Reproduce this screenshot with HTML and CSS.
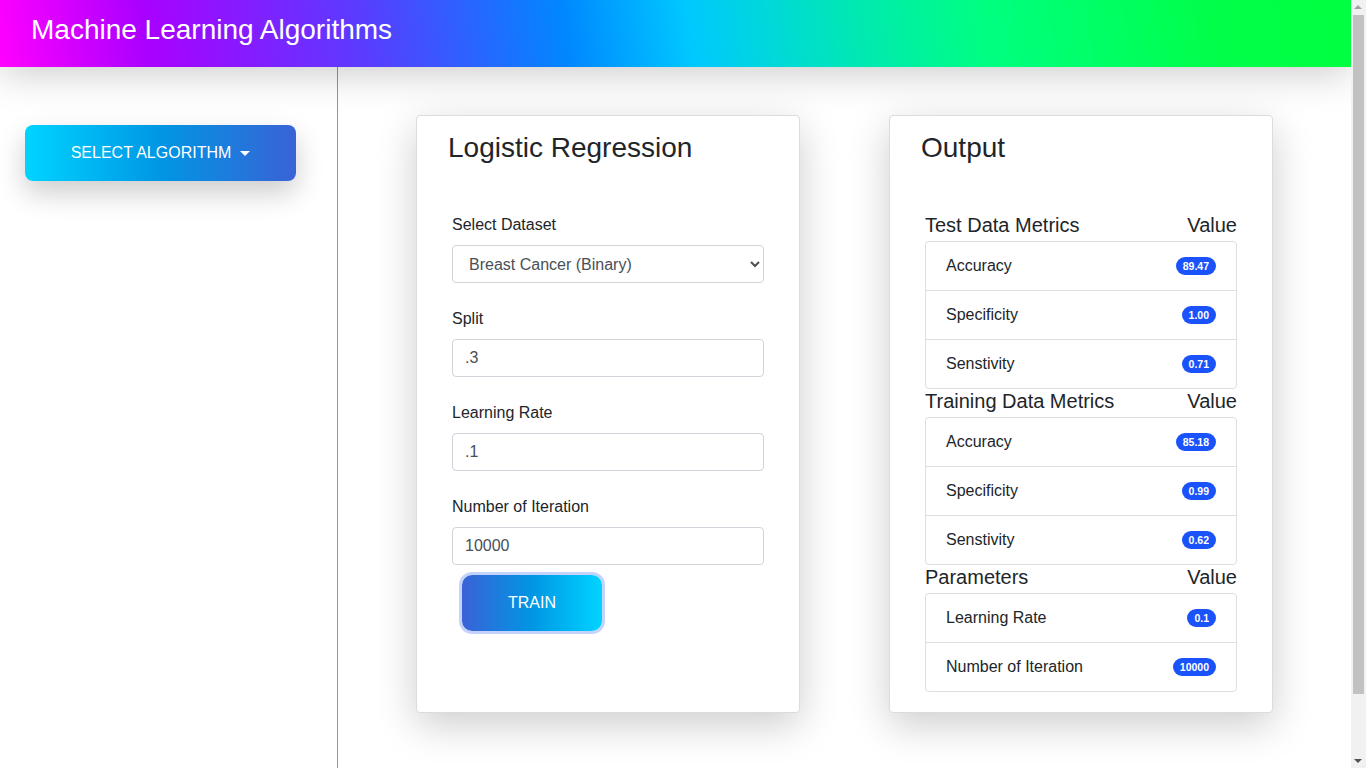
FILE: index.html
```html
<!DOCTYPE html>
<html lang="en">
<head>
<meta charset="utf-8">
<title>Machine Learning Algorithms</title>
<link rel="stylesheet" href="styles.css">
</head>
<body>
<header class="topbar">
  <h1 class="brand">Machine Learning Algorithms</h1>
</header>
<div class="layout">
  <aside class="sidebar">
    <button class="algo-btn" type="button">SELECT ALGORITHM<span class="caret"></span></button>
  </aside>
  <main class="main">
    <div class="cards">
      <section class="card">
        <h3 class="card-title">Logistic Regression</h3>
        <form class="form">
          <div class="group">
            <label class="label">Select Dataset</label>
            <select class="control">
              <option>Breast Cancer (Binary)</option>
              <option>Iris</option>
            </select>
          </div>
          <div class="group">
            <label class="label">Split</label>
            <input class="control" type="text" value=".3">
          </div>
          <div class="group">
            <label class="label">Learning Rate</label>
            <input class="control" type="text" value=".1">
          </div>
          <div class="group last">
            <label class="label">Number of Iteration</label>
            <input class="control" type="text" value="10000">
          </div>
          <button class="train-btn" type="button">TRAIN</button>
        </form>
      </section>
      <section class="card">
        <h3 class="card-title">Output</h3>
        <div class="list-head"><span>Test Data Metrics</span><span>Value</span></div>
        <ul class="list">
          <li class="item"><span>Accuracy</span><span class="badge">89.47</span></li>
          <li class="item"><span>Specificity</span><span class="badge">1.00</span></li>
          <li class="item"><span>Senstivity</span><span class="badge">0.71</span></li>
        </ul>
        <div class="list-head"><span>Training Data Metrics</span><span>Value</span></div>
        <ul class="list">
          <li class="item"><span>Accuracy</span><span class="badge">85.18</span></li>
          <li class="item"><span>Specificity</span><span class="badge">0.99</span></li>
          <li class="item"><span>Senstivity</span><span class="badge">0.62</span></li>
        </ul>
        <div class="list-head"><span>Parameters</span><span>Value</span></div>
        <ul class="list">
          <li class="item"><span>Learning Rate</span><span class="badge">0.1</span></li>
          <li class="item"><span>Number of Iteration</span><span class="badge">10000</span></li>
        </ul>
      </section>
    </div>
  </main>
</div>
</body>
</html>
```
FILE: styles.css
```css
* { box-sizing: border-box; }
html, body { margin: 0; padding: 0; }
html {
  background:
    linear-gradient(#c1c1c1, #c1c1c1) right 2px top 15px / 11px 679px no-repeat fixed,
    linear-gradient(#f1f1f1, #f1f1f1) right top / 15px 100% no-repeat fixed,
    #fff;
}
body {
  margin-right: 15px;
  font-family: "Liberation Sans", Arial, sans-serif;
  font-size: 16px;
  line-height: 24px;
  color: #212529;
  background: #fff;
}
body::before,
body::after {
  content: "";
  position: fixed;
  right: 4px;
  width: 0;
  height: 0;
  border-left: 4px solid transparent;
  border-right: 4px solid transparent;
}
body::before { top: 5px; border-bottom: 4px solid #a3a3a3; }
body::after { bottom: 5px; border-top: 4px solid #505050; }
.topbar {
  position: relative;
  z-index: 2;
  height: 67px;
  display: flex;
  align-items: center;
  padding-left: 31px;
  background: linear-gradient(82deg, #ff00ff 0%, #aa00ff 11%, #5a3cff 27%, #0088ff 42%, #00c8ff 51%, #00e8b4 63%, #00ff80 73%, #00ff48 90%, #00ff40 100%);
  box-shadow: 0 5px 40px rgba(0, 0, 0, 0.22);
}
.brand {
  margin: 0 0 8px 0;
  font-size: 28px;
  font-weight: 400;
  line-height: 34px;
  color: #fff;
}
.layout {
  display: flex;
  min-height: 100vh;
}
.sidebar {
  flex: 0 0 338px;
  border-right: 1px solid #e35ee6;
  padding: 58px 0 0 25px;
}
.algo-btn {
  width: 271px;
  height: 56px;
  border: 0;
  border-radius: 8px;
  background: linear-gradient(to right, #00d4ff 0%, #0096e4 50%, #3a62d6 100%);
  color: #fff;
  font-family: inherit;
  font-size: 16px;
  display: flex;
  align-items: center;
  justify-content: center;
  box-shadow: 0 12px 28px rgba(0, 0, 0, 0.2);
  padding: 0;
}
.caret {
  display: inline-block;
  margin-left: 9px;
  border-top: 5px solid #fff;
  border-left: 5px solid transparent;
  border-right: 5px solid transparent;
}
.main {
  flex: 1;
  padding-top: 48px;
  display: flex;
  justify-content: center;
  align-items: flex-start;
}
.cards {
  display: flex;
  gap: 89px;
  align-items: stretch;
}
.card {
  width: 384px;
  background: #fff;
  border: 1px solid #dcdcdc;
  border-radius: 4px;
  padding: 15px 35px 20px;
  box-shadow: 0 12px 40px rgba(0, 0, 0, 0.2);
}
.card-title {
  margin: 0 0 48px -4px;
  font-size: 28px;
  font-weight: 400;
  line-height: 34px;
}
.form { margin: 0; }
.group { margin-bottom: 24px; }
.group.last { margin-bottom: 0; }
.label {
  display: block;
  margin-bottom: 8px;
  line-height: 24px;
}
.control {
  display: block;
  width: 100%;
  height: 38px;
  padding: 6px 12px;
  font-family: inherit;
  font-size: 16px;
  line-height: 24px;
  color: #495057;
  background: #fff;
  border: 1px solid #ced4da;
  border-radius: 4px;
}
.train-btn {
  margin: 10px 0 0 10px;
  width: 140px;
  height: 56px;
  border: 0;
  border-radius: 10px;
  background: linear-gradient(to right, #3a62d6 0%, #0096e4 50%, #00d4ff 100%);
  color: #fff;
  font-family: inherit;
  font-size: 16px;
  box-shadow: 0 0 0 3px #c3d3fb;
  padding: 0;
}
.list-head {
  display: flex;
  justify-content: space-between;
  font-size: 20px;
  line-height: 24px;
  margin-bottom: 4px;
}
.list {
  list-style: none;
  margin: 0;
  padding: 0;
  border: 1px solid rgba(0, 0, 0, 0.125);
  border-radius: 4px;
}
.item {
  display: flex;
  justify-content: space-between;
  align-items: center;
  padding: 12px 20px;
  line-height: 24px;
}
.item + .item { border-top: 1px solid rgba(0, 0, 0, 0.125); }
.badge {
  display: inline-block;
  height: 18px;
  line-height: 18px;
  padding: 0 7px;
  font-size: 10.5px;
  font-weight: 700;
  color: #fff;
  background: #1a53fb;
  border-radius: 10px;
}
```
